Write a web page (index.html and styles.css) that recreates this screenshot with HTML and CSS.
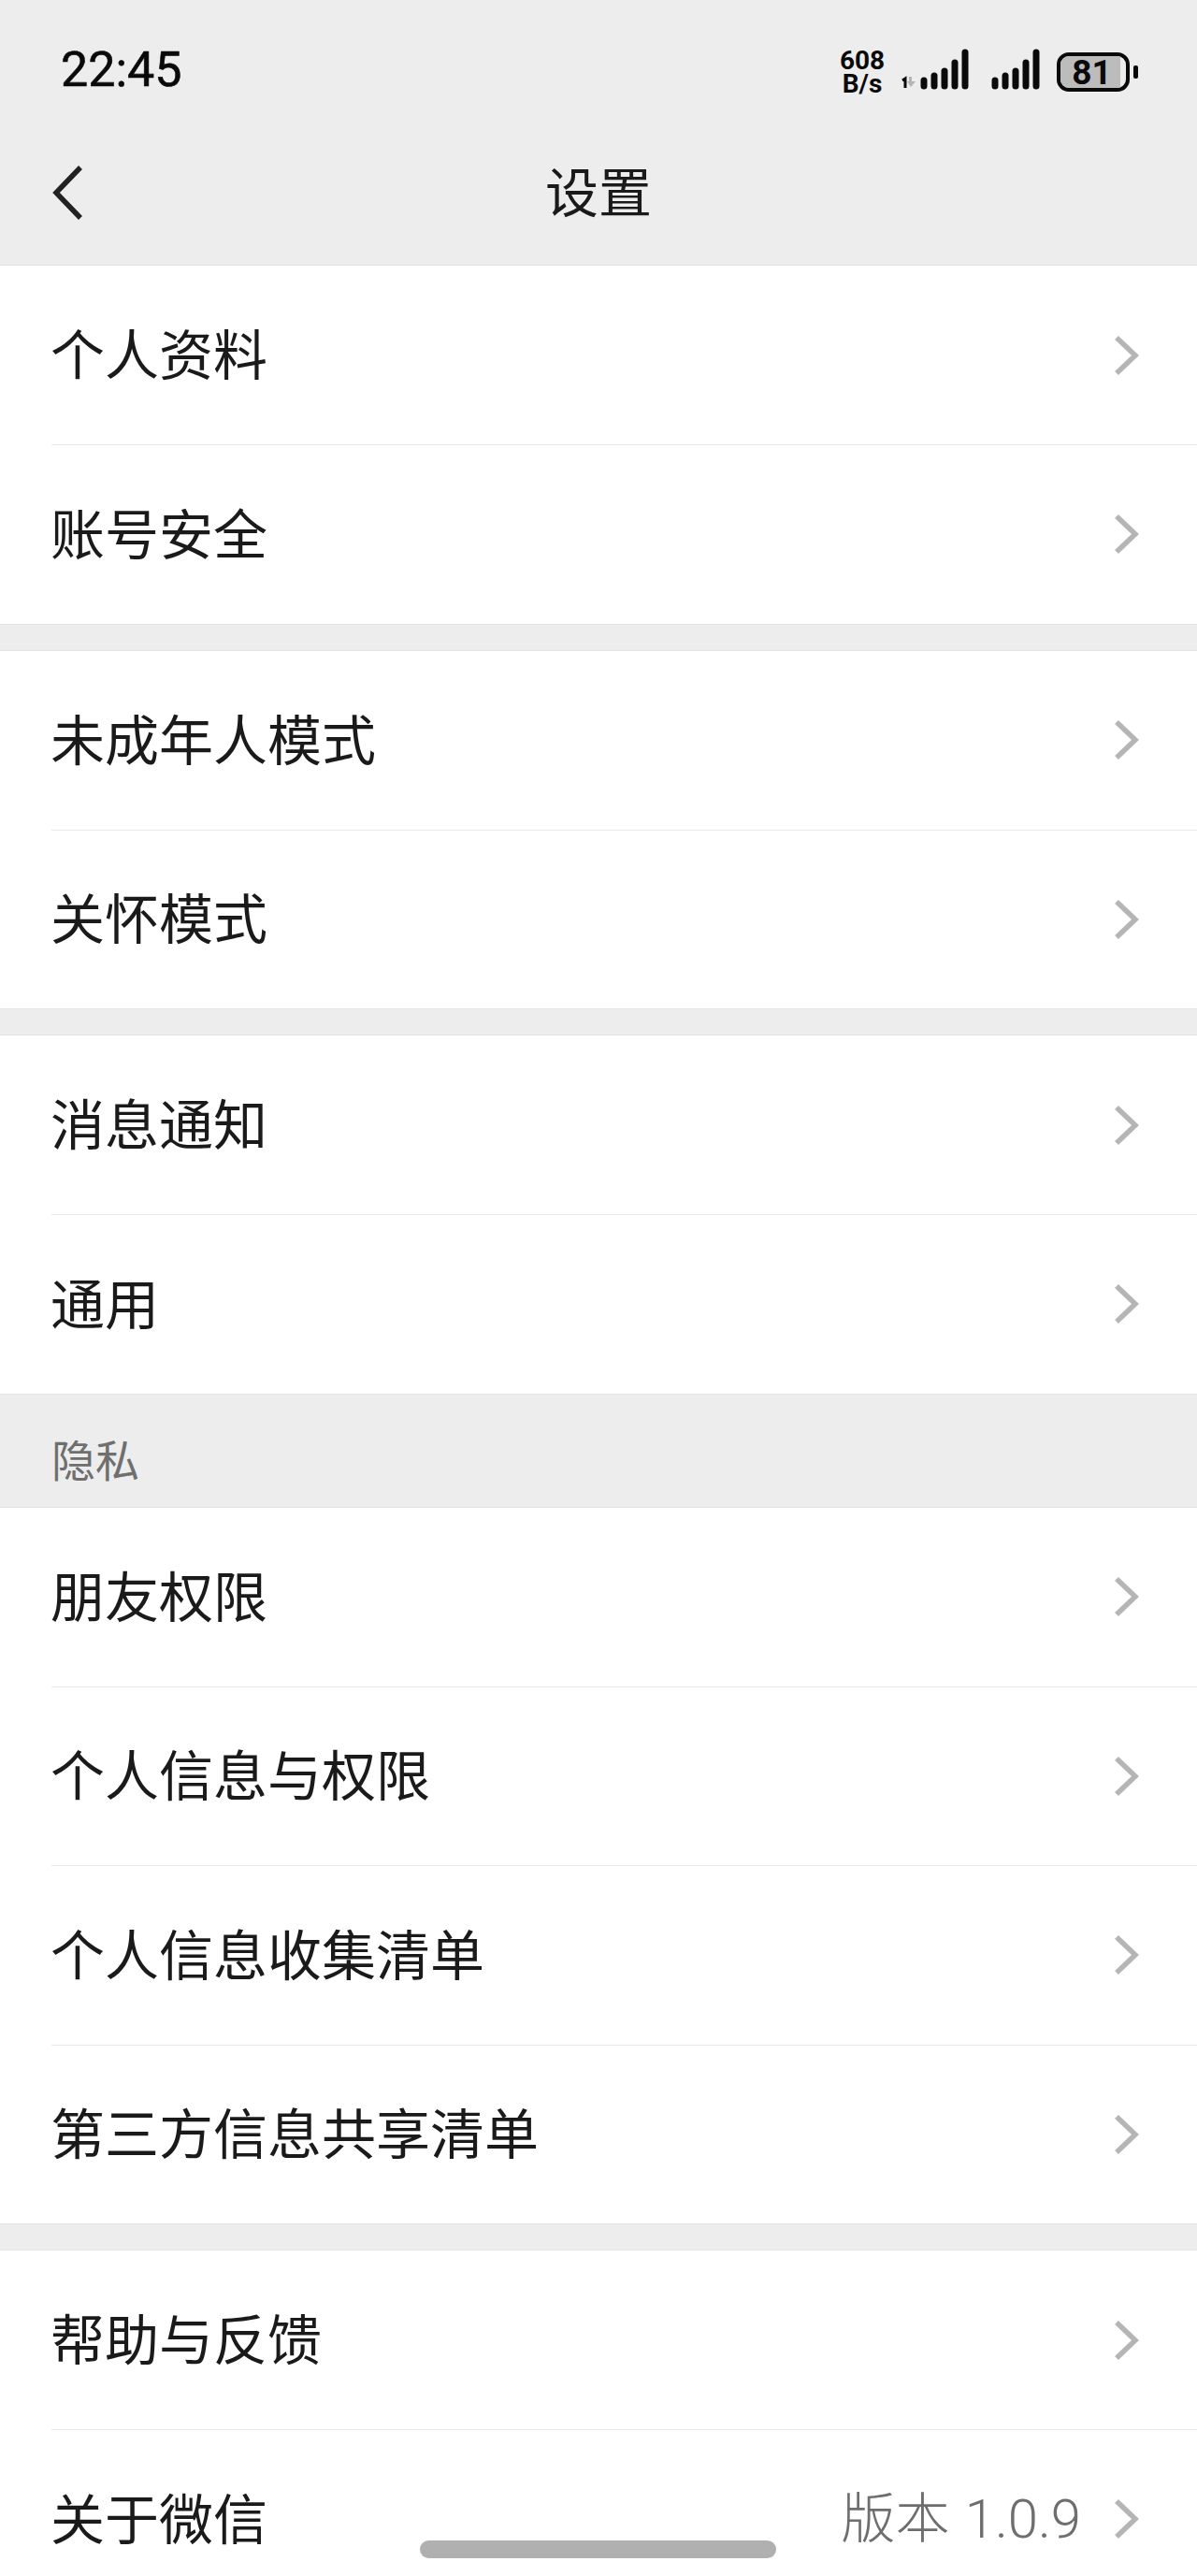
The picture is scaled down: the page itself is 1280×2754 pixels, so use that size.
FILE: index.html
```html
<!DOCTYPE html>
<html lang="zh-CN">
<head>
    <meta charset="UTF-8">
    <meta name="viewport" content="width=device-width, initial-scale=1.0">
    <title>设置</title>
    <link rel="stylesheet" href="styles.css">
</head>
<body>
    <div class="header">
        <div class="status-bar">
            <div class="time">22:45</div>
            <div class="status-icons">
                <div class="speed">608<br>B/s</div>
                <svg class="signal-one" width="78" height="44" viewBox="0 0 78 44">
                    <path class="sim-no" d="M4 34l3-2v10"/>
                    <path class="sim-arrow" d="M11 30h3v5h4l-5 6-4-6h2z"/>
                    <g class="bars">
                        <line x1="27" y1="34" x2="27" y2="40"/>
                        <line x1="38" y1="29" x2="38" y2="40"/>
                        <line x1="49" y1="24" x2="49" y2="40"/>
                        <line x1="60" y1="15" x2="60" y2="40"/>
                        <line x1="71" y1="4" x2="71" y2="40"/>
                    </g>
                </svg>
                <svg class="signal-two" width="54" height="44" viewBox="0 0 54 44">
                    <g class="bars">
                        <line x1="5" y1="34" x2="5" y2="40"/>
                        <line x1="16" y1="29" x2="16" y2="40"/>
                        <line x1="27" y1="24" x2="27" y2="40"/>
                        <line x1="38" y1="15" x2="38" y2="40"/>
                        <line x1="49" y1="4" x2="49" y2="40"/>
                    </g>
                </svg>
                <div class="battery">
                    <div class="battery-body">
                        <div class="battery-fill"></div>
                        <span class="battery-text">81</span>
                    </div>
                    <div class="battery-nub"></div>
                </div>
            </div>
        </div>
        <div class="nav">
            <svg class="back" width="36" height="62" viewBox="0 0 36 62">
                <path d="M31 4L5 31l26 27"/>
            </svg>
            <div class="title">设置</div>
        </div>
    </div>

    <div class="group">
        <div class="row"><div class="label">个人资料</div><svg class="chevron" viewBox="0 0 28 46"><path d="M4 4l20 19L4 42"/></svg></div>
        <div class="row"><div class="label">账号安全</div><svg class="chevron" viewBox="0 0 28 46"><path d="M4 4l20 19L4 42"/></svg></div>
    </div>
    <div class="gap"></div>
    <div class="group">
        <div class="row"><div class="label">未成年人模式</div><svg class="chevron" viewBox="0 0 28 46"><path d="M4 4l20 19L4 42"/></svg></div>
        <div class="row"><div class="label">关怀模式</div><svg class="chevron" viewBox="0 0 28 46"><path d="M4 4l20 19L4 42"/></svg></div>
    </div>
    <div class="gap"></div>
    <div class="group">
        <div class="row"><div class="label">消息通知</div><svg class="chevron" viewBox="0 0 28 46"><path d="M4 4l20 19L4 42"/></svg></div>
        <div class="row"><div class="label">通用</div><svg class="chevron" viewBox="0 0 28 46"><path d="M4 4l20 19L4 42"/></svg></div>
    </div>
    <div class="section-title">隐私</div>
    <div class="group">
        <div class="row"><div class="label">朋友权限</div><svg class="chevron" viewBox="0 0 28 46"><path d="M4 4l20 19L4 42"/></svg></div>
        <div class="row"><div class="label">个人信息与权限</div><svg class="chevron" viewBox="0 0 28 46"><path d="M4 4l20 19L4 42"/></svg></div>
        <div class="row"><div class="label">个人信息收集清单</div><svg class="chevron" viewBox="0 0 28 46"><path d="M4 4l20 19L4 42"/></svg></div>
        <div class="row"><div class="label">第三方信息共享清单</div><svg class="chevron" viewBox="0 0 28 46"><path d="M4 4l20 19L4 42"/></svg></div>
    </div>
    <div class="gap"></div>
    <div class="group">
        <div class="row"><div class="label">帮助与反馈</div><svg class="chevron" viewBox="0 0 28 46"><path d="M4 4l20 19L4 42"/></svg></div>
        <div class="row"><div class="label">关于微信</div><div class="version">版本 1.0.9</div><svg class="chevron" viewBox="0 0 28 46"><path d="M4 4l20 19L4 42"/></svg></div>
    </div>

    <div class="home-bar"></div>
</body>
</html>
```

FILE: styles.css
```css
html, body {
    height: 100%;
}
body {
    margin: 0;
    overflow: hidden;
    background: #ededed;
    color: #1a1a1a;
    font-family: "Noto Sans CJK SC", "Noto Sans", sans-serif;
}
.header {
    height: 283px;
}
.status-bar {
    height: 108px;
    padding: 20px 63px 0 65px;
    display: flex;
    justify-content: space-between;
    align-items: center;
}
.time {
    margin-top: 2px;
    font-family: "Roboto", sans-serif;
    font-size: 52px;
    line-height: 60px;
    color: #0a0a0a;
    -webkit-text-stroke: 0.6px #0a0a0a;
}
.status-icons {
    display: flex;
    align-items: center;
}
.speed {
    width: 50px;
    margin: 6px 14px 0 0;
    font-family: "Roboto", sans-serif;
    font-weight: 700;
    font-size: 28px;
    line-height: 25px;
    text-align: center;
    color: #0a0a0a;
}
.signal-one {
    margin-right: 20px;
}
.signal-two {
    margin-right: 17px;
}
.bars line {
    stroke: #0a0a0a;
    stroke-width: 7;
    stroke-linecap: round;
}
.sim-no {
    fill: none;
    stroke: #0a0a0a;
    stroke-width: 3;
}
.sim-arrow {
    fill: #b5b5b5;
}
.battery {
    display: flex;
    align-items: center;
    gap: 4px;
    margin-top: 6px;
}
.battery-body {
    position: relative;
    width: 78px;
    height: 42px;
    box-sizing: border-box;
    border: 4px solid #0a0a0a;
    border-radius: 13px;
    overflow: hidden;
}
.battery-fill {
    width: 91%;
    height: 100%;
    background: #bcbcbc;
}
.battery-text {
    position: absolute;
    top: 0;
    left: 0;
    right: 3px;
    bottom: 0;
    text-align: center;
    font-family: "Roboto", sans-serif;
    font-weight: 700;
    font-size: 37px;
    line-height: 35px;
    color: #0a0a0a;
}
.battery-nub {
    width: 5px;
    height: 14px;
    border-radius: 2px;
    background: #0a0a0a;
}
.nav {
    position: relative;
    height: 155px;
    display: flex;
    align-items: center;
    justify-content: center;
}
.back {
    position: absolute;
    left: 55px;
    top: 47px;
}
.back path {
    fill: none;
    stroke: #222;
    stroke-width: 5.5;
}
.title {
    padding-bottom: 7px;
    font-size: 57px;
    line-height: 80px;
    color: #1a1a1a;
}
.group {
    background: #fff;
    border-top: 1px solid #e4e4e4;
    border-bottom: 1px solid #e4e4e4;
}
.gap {
    height: 27px;
}
.row {
    height: 191.5px;
    margin-left: 55px;
    padding-right: 62px;
    display: flex;
    align-items: center;
    box-sizing: border-box;
    border-top: 1px solid #e8e8e8;
}
.group > .row:first-child {
    border-top: 0;
    height: 191px;
}
.label {
    flex: 1;
    margin-left: -1px;
    padding-bottom: 7px;
    font-size: 58px;
    line-height: 80px;
}
.version {
    margin-right: 34px;
    font-family: "Roboto", "Noto Sans CJK SC", sans-serif;
    font-size: 58px;
    font-weight: 300;
    word-spacing: 2px;
    line-height: 80px;
    color: #6e6e6e;
}
.chevron {
    width: 28px;
    height: 46px;
    flex-shrink: 0;
}
.chevron path {
    fill: none;
    stroke: #b5b5b5;
    stroke-width: 5.5;
}
.section-title {
    height: 120px;
    padding: 0 0 22px 55px;
    display: flex;
    align-items: flex-end;
    box-sizing: border-box;
    font-size: 47px;
    line-height: 60px;
    color: #6f6f6f;
}
.home-bar {
    position: fixed;
    left: 449px;
    top: 2716px;
    width: 381px;
    height: 19px;
    border-radius: 10px;
    background: #b0b0b0;
}
```
